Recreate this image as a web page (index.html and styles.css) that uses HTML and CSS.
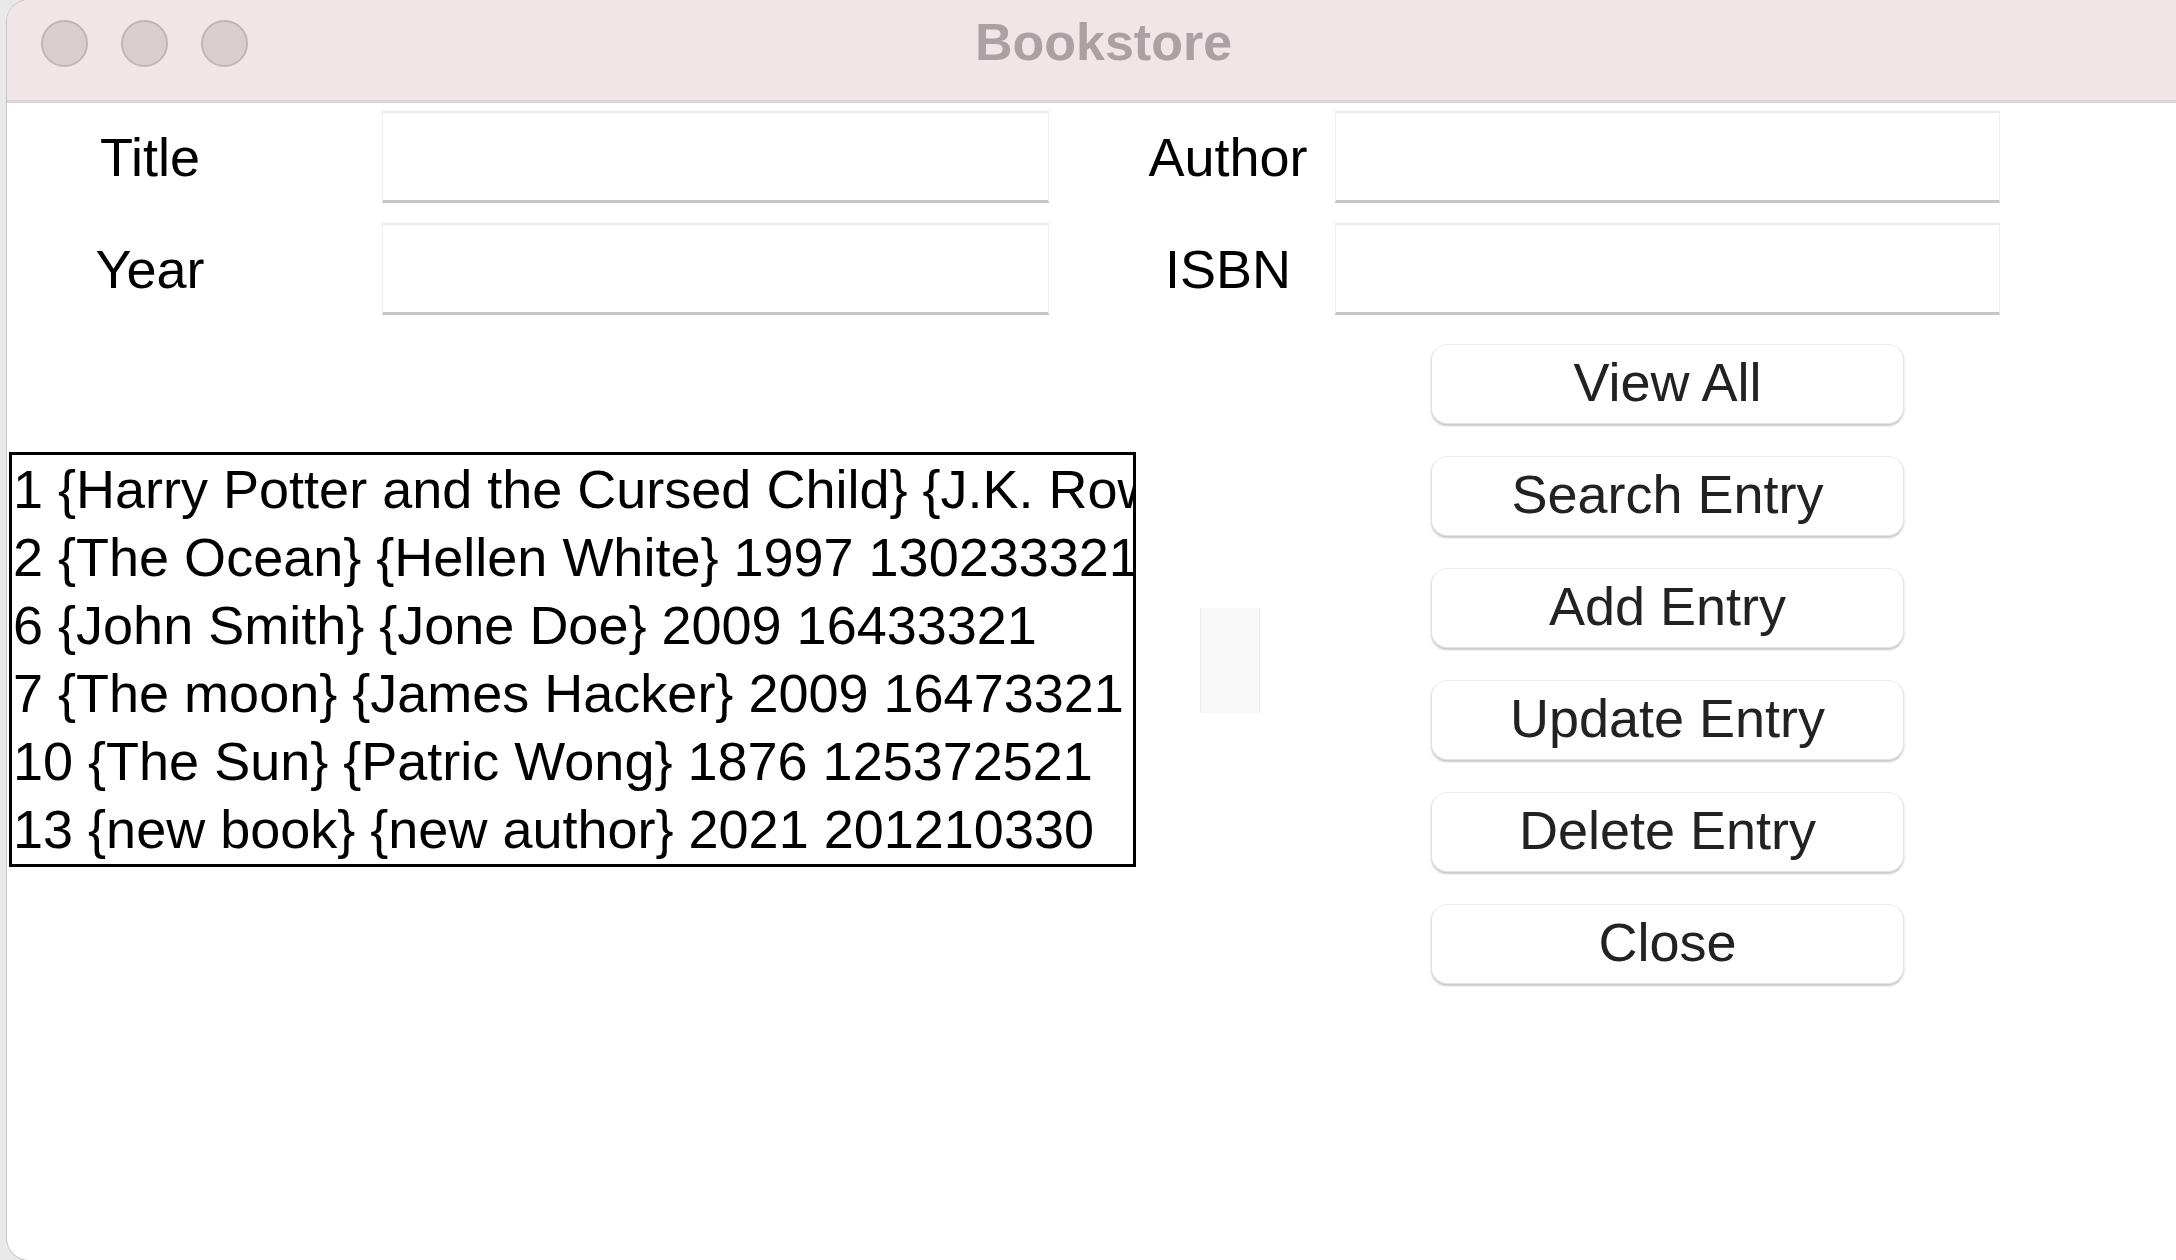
FILE: index.html
```html
<!DOCTYPE html>
<html>
<head>
<meta charset="utf-8">
<title>Bookstore</title>
<link rel="stylesheet" href="styles.css">
</head>
<body>
<div class="window">
  <header class="titlebar">
    <div class="lights">
      <span class="light"></span>
      <span class="light"></span>
      <span class="light"></span>
    </div>
    <div class="title">Bookstore</div>
    <div class="spacer"></div>
  </header>
  <div class="content">
    <div class="form">
      <label class="lbl">Title</label>
      <div class="entry entry-left"></div>
      <label class="lbl">Author</label>
      <div class="entry entry-right"></div>
      <label class="lbl">Year</label>
      <div class="entry entry-left"></div>
      <label class="lbl">ISBN</label>
      <div class="entry entry-right"></div>
    </div>
    <div class="main">
      <div class="listbox">
        <div class="row">1 {Harry Potter and the Cursed Child} {J.K. Rowling}</div>
        <div class="row">2 {The Ocean} {Hellen White} 1997 130233321</div>
        <div class="row">6 {John Smith} {Jone Doe} 2009 16433321</div>
        <div class="row">7 {The moon} {James Hacker} 2009 16473321</div>
        <div class="row">10 {The Sun} {Patric Wong} 1876 125372521</div>
        <div class="row">13 {new book} {new author} 2021 201210330</div>
      </div>
      <div class="scrollbar"></div>
      <div class="buttons">
        <button class="btn">View All</button>
        <button class="btn">Search Entry</button>
        <button class="btn">Add Entry</button>
        <button class="btn">Update Entry</button>
        <button class="btn">Delete Entry</button>
        <button class="btn">Close</button>
      </div>
    </div>
  </div>
</div>
</body>
</html>
```

FILE: styles.css
```css
* { box-sizing: border-box; }

html, body {
  margin: 0;
  padding: 0;
  width: 2176px;
  height: 1260px;
  overflow: hidden;
  font-family: "Liberation Sans", Arial, sans-serif;
}

body {
  background: linear-gradient(to right, #e9e9e9, #d6d6d6);
}

.window {
  margin-left: 7px;
  width: 2193px;
  height: 1260px;
  background: #ffffff;
  border-radius: 22px 0 0 22px;
  overflow: hidden;
  box-shadow: 0 0 0 1px #c6c6c6;
}

.titlebar {
  height: 103px;
  background: #f0e6e7;
  border-bottom: 3px solid #dad7d7;
  display: grid;
  grid-template-columns: 1fr auto 1fr;
  align-items: center;
}

.lights {
  display: flex;
  gap: 33px;
  padding-left: 34px;
  margin-bottom: 14px;
}

.light {
  width: 47px;
  height: 47px;
  border-radius: 50%;
  background: #d8cfd1;
  border: 2px solid #c0b6b9;
}

.title {
  font-weight: bold;
  font-size: 52px;
  color: #a9a1a3;
  margin-bottom: 17px;
}

.content {
  padding-top: 8px;
}

.form {
  display: grid;
  grid-template-columns: 286px 828px 214px 665px;
  grid-auto-rows: 92px;
  row-gap: 20px;
  align-items: center;
}

.lbl {
  font-size: 54px;
  color: #000;
  text-align: center;
}

.entry {
  height: 92px;
  background: #fff;
  border: 1px solid #f0f0f0;
  border-top: 2px solid #ebebeb;
  border-bottom: 3px solid #c6c6c6;
}

.entry-left {
  margin-left: 89px;
  width: 667px;
}

.entry-right {
  width: 665px;
}

.main {
  display: flex;
  align-items: center;
  padding-top: 29px;
}

.listbox {
  margin-left: 2px;
  margin-bottom: 9px;
  width: 1127px;
  height: 415px;
  border: 3px solid #000;
  overflow: hidden;
}

.row {
  height: 68px;
  line-height: 68px;
  font-size: 54px;
  color: #000;
  white-space: nowrap;
  overflow: hidden;
  padding-left: 1px;
}

.scrollbar {
  margin-left: 64px;
  margin-bottom: 7px;
  width: 60px;
  height: 105px;
  background: #f8f8f8;
  border-left: 1px solid #ededed;
  border-right: 1px solid #ededed;
}

.buttons {
  margin-left: 171px;
  width: 473px;
  display: flex;
  flex-direction: column;
  gap: 32px;
}

.btn {
  height: 80px;
  width: 473px;
  background: #ffffff;
  border: 1px solid #e3e3e3;
  border-top-color: #ececec;
  border-radius: 16px;
  box-shadow: 0 2px 2px rgba(0, 0, 0, 0.22);
  font-family: "Liberation Sans", Arial, sans-serif;
  font-size: 54px;
  color: #222222;
  padding: 0 0 4px 0;
}
```
